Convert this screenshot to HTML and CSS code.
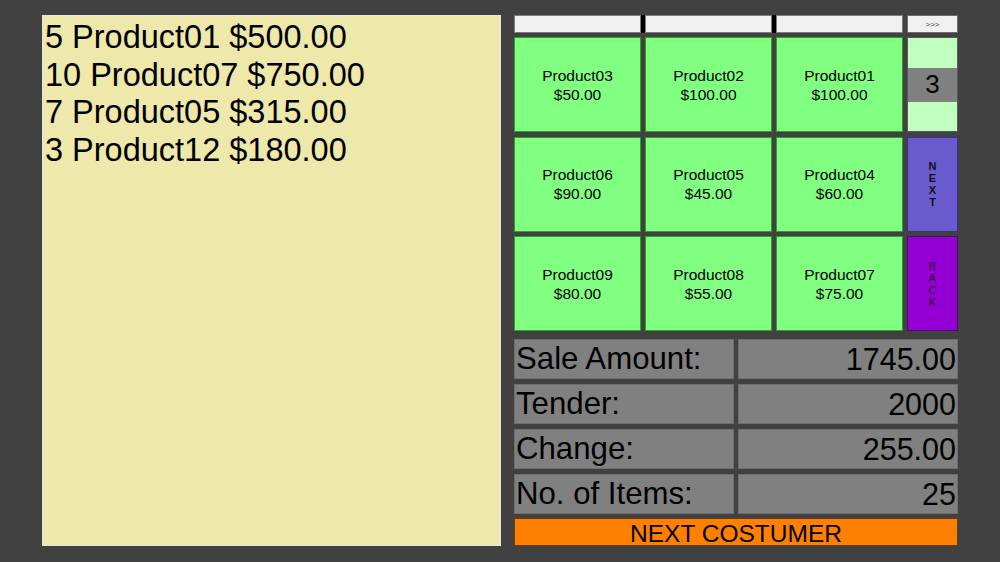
FILE: index.html
```html
<!DOCTYPE html>
<html>
<head>
<meta charset="utf-8">
<link rel="stylesheet" href="styles.css">
</head>
<body>
<div class="app">
  <div class="receipt">
    <div class="line">5 Product01 $500.00</div>
    <div class="line">10 Product07 $750.00</div>
    <div class="line">7 Product05 $315.00</div>
    <div class="line">3 Product12 $180.00</div>
  </div>
  <div class="side">
    <div class="topbar">
      <div class="tabs">
        <div class="tab"></div>
        <div class="tab"></div>
        <div class="tab"></div>
      </div>
      <div class="more">&gt;&gt;&gt;</div>
    </div>
    <div class="products">
      <div class="prod">Product03<br>$50.00</div>
      <div class="prod">Product02<br>$100.00</div>
      <div class="prod">Product01<br>$100.00</div>
      <div class="pager">
        <div class="pg-light"></div>
        <div class="pg-num">3</div>
        <div class="pg-light"></div>
      </div>
      <div class="prod">Product06<br>$90.00</div>
      <div class="prod">Product05<br>$45.00</div>
      <div class="prod">Product04<br>$60.00</div>
      <div class="nav next"><span>N</span><span>E</span><span>X</span><span>T</span></div>
      <div class="prod">Product09<br>$80.00</div>
      <div class="prod">Product08<br>$55.00</div>
      <div class="prod">Product07<br>$75.00</div>
      <div class="nav back"><span>B</span><span>A</span><span>C</span><span>K</span></div>
    </div>
    <div class="summary">
      <div class="cell label">Sale Amount:</div>
      <div class="cell value">1745.00</div>
      <div class="cell label">Tender:</div>
      <div class="cell value">2000</div>
      <div class="cell label">Change:</div>
      <div class="cell value">255.00</div>
      <div class="cell label">No. of Items:</div>
      <div class="cell value">25</div>
    </div>
    <div class="nextcust">NEXT COSTUMER</div>
  </div>
</div>
</body>
</html>
```

FILE: styles.css
```css
* { box-sizing: border-box; }
html, body {
  margin: 0;
  padding: 0;
  background: #414141;
  width: 1000px;
  height: 562px;
  overflow: hidden;
  font-family: "Liberation Sans", Arial, sans-serif;
  color: #000;
}
.app {
  display: flex;
  align-items: flex-start;
  padding: 15px 0 0 42px;
  gap: 13px;
}
.receipt {
  width: 459px;
  height: 531px;
  background: #eee8aa;
  border: 1px solid #e6e6e6;
  padding: 3px 2px 0 2px;
  font-size: 32.5px;
  line-height: 37.5px;
}
.side {
  width: 444px;
  display: flex;
  flex-direction: column;
}
.side > * { flex-shrink: 0; }
.topbar {
  display: flex;
  gap: 4px;
  height: 18px;
}
.tabs {
  display: grid;
  grid-template-columns: 127px 127px 127px;
  gap: 4px;
  background: #000;
}
.tab {
  background: #f0f0f0;
  border: 1px solid #7c7c7c;
}
.more {
  width: 51px;
  background: #f0f0f0;
  border: 1px solid #6c6c6c;
  font-size: 8px;
  color: #444;
  display: flex;
  align-items: center;
  justify-content: center;
}
.products {
  margin-top: 4px;
  display: grid;
  grid-template-columns: 127px 127px 127px 51px;
  grid-template-rows: 95px 95px 95px;
  column-gap: 4px;
  row-gap: 4.5px;
}
.prod {
  background: #80ff80;
  border: 1px solid #2f9e2f;
  font-size: 15.5px;
  line-height: 19px;
  text-align: center;
  display: flex;
  align-items: center;
  justify-content: center;
}
.pager {
  display: flex;
  flex-direction: column;
  border: 1px solid #5a5a5a;
}
.pg-light {
  background: #c0ffc0;
  flex: 1;
}
.pg-num {
  height: 34px;
  background: #808080;
  font-size: 26px;
  display: flex;
  align-items: center;
  justify-content: center;
}
.nav {
  display: flex;
  flex-direction: column;
  align-items: center;
  justify-content: center;
  font-size: 11px;
  line-height: 12px;
}
.next {
  background: #6a5acd;
  border: 1px solid #3a2f8a;
  font-weight: bold;
  color: #111;
}
.back {
  background: #9400d3;
  border: 1px solid #4a0a66;
  color: #2a0030;
}
.summary {
  margin-top: 8px;
  display: grid;
  grid-template-columns: 220px 220px;
  grid-template-rows: repeat(4, 40px);
  column-gap: 4px;
  row-gap: 5px;
}
.cell {
  background: #808080;
  border: 1px solid #6e6e6e;
  font-size: 30.5px;
  display: flex;
  align-items: center;
}
.label { padding-left: 1px; font-size: 31.2px; }
.value {
  justify-content: flex-end;
  padding-right: 1px;
}
.nextcust {
  margin-top: 4px;
  height: 28px;
  background: #ff8000;
  border: 1px solid #6a3a10;
  font-size: 24.5px;
  line-height: 26px;
  padding-top: 2px;
  text-align: center;
}
```
